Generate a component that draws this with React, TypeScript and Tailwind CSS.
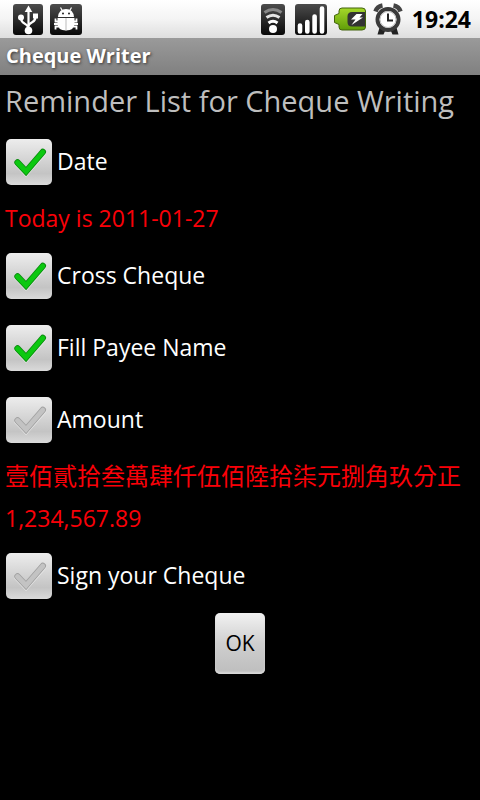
import { useState } from 'react'
import { clsx } from 'clsx'

interface CheckItem {
  id: string
  label: string
  done: boolean
  notes: string[]
}

const initialItems: CheckItem[] = [
  { id: 'date', label: 'Date', done: true, notes: ['Today is 2011-01-27'] },
  { id: 'cross', label: 'Cross Cheque', done: true, notes: [] },
  { id: 'payee', label: 'Fill Payee Name', done: true, notes: [] },
  { id: 'amount', label: 'Amount', done: false, notes: ['壹佰貳拾叁萬肆仟伍佰陸拾柒元捌角玖分正', '1,234,567.89'] },
  { id: 'sign', label: 'Sign your Cheque', done: false, notes: [] },
]

export default function App() {
  const [items, setItems] = useState(initialItems)

  function toggle(id: string) {
    setItems(items.map(i => (i.id === id ? { ...i, done: !i.done } : i)))
  }

  return (
    <div className="min-h-screen bg-black font-['Open_Sans','Noto_Sans_CJK_TC',sans-serif]">
      <StatusBar />
      <header className="flex h-[37px] items-center bg-linear-to-b from-[#9a9a9a] to-[#808080] px-1.5 pb-0.5">
        <h1 className="text-xl font-bold text-white [text-shadow:1px_1px_3px_#333]">Cheque Writer</h1>
      </header>

      <main className="px-[5px]">
        <h2 className="py-1.5 text-[29px] leading-[39px] whitespace-nowrap text-[#bebebe]">Reminder List for Cheque Writing</h2>
        {items.map(item => (
          <div key={item.id}>
            <CheckRow item={item} onToggle={() => toggle(item.id)} />
            {item.notes.map(note => <Note key={note} text={note} />)}
          </div>
        ))}
        <div className="flex justify-center">
          <button
            type="button"
            className="mt-px h-[61px] rounded-[5px] bg-linear-to-b from-[#f2f2f2] via-[#cfcfcf] via-50% to-[#bdbdbd] px-2.5 text-[21px] text-black shadow-[inset_0_-2px_2px_#d8d8d8]"
          >
            OK
          </button>
        </div>
      </main>
    </div>
  )
}

function Note({ text }: { text: string }) {
  const chinese = /[\u4e00-\u9fff]/.test(text)
  return (
    <p
      lang={chinese ? 'zh-Hant' : undefined}
      className={clsx('h-[42px] leading-10 whitespace-nowrap text-[#fa0008]', chinese ? 'text-2xl' : 'text-[23px]')}
    >
      {text}
    </p>
  )
}

function CheckRow({ item, onToggle }: { item: CheckItem; onToggle: () => void }) {
  return (
    <label className="flex h-[72px] items-center gap-[5px] pl-px">
      <span className="grid size-[46px]">
        <input
          type="checkbox"
          checked={item.done}
          onChange={onToggle}
          className="col-start-1 row-start-1 size-[46px] appearance-none rounded-[5px] bg-linear-to-b from-[#ededed] via-[#c4c4c4] via-75% to-[#dadada]"
        />
        <svg viewBox="0 0 46 46" className="pointer-events-none col-start-1 row-start-1 size-[46px]" fill="none" strokeLinecap="round">
          <path d="M11.500 24.500l8.500 9L37 14" stroke="#e6e6e6" strokeWidth="6.500" />
          <path d="M11.500 23.500l8.500 9L36.800 13" className={clsx(item.done ? 'stroke-[#0a8a0e]' : 'stroke-[#a0a0a0]')} strokeWidth="6.400" />
          <path d="M11.500 23.500l8.500 9L36.800 13" className={clsx(item.done ? 'stroke-[#0cc810]' : 'stroke-[#c3c3c3]')} strokeWidth="4.800" />
        </svg>
      </span>
      <span className="pb-0.5 text-[23px] text-white">{item.label}</span>
    </label>
  )
}

function StatusBar() {
  return (
    <div className="flex h-[38px] items-center justify-between bg-linear-to-b from-white via-[#f4f4f4] via-50% to-[#dedede] pr-[9px] pl-[13px]">
      <div className="flex items-center gap-[7px]">
        <UsbIcon />
        <DebugIcon />
      </div>
      <div className="flex items-center gap-[7px]">
        <div className="flex items-center gap-2.5">
          <WifiIcon />
          <SignalIcon />
        </div>
        <BatteryIcon />
        <AlarmIcon />
        <span className="pl-0.5 text-[23px] font-bold text-black">19:24</span>
      </div>
    </div>
  )
}

// dark rounded tile shared by most of the status icons
function Tile({ width }: { width: number }) {
  return (
    <>
      <defs>
        <linearGradient id="tile" x1="0" y1="0" x2="0" y2="1">
          <stop offset="0" stopColor="#4c4c4c" />
          <stop offset="1" stopColor="#080808" />
        </linearGradient>
      </defs>
      <rect width={width} height="31" rx="3" fill="url(#tile)" />
    </>
  )
}

function UsbIcon() {
  return (
    <svg width="30" height="31" viewBox="0 0 30 31">
      <Tile width={30} />
      <g fill="none" stroke="#fff" strokeWidth="2.200">
        <path d="M15.500 26V6" />
        <path d="M15.500 24q-1-3-4-4.500-3.500-2-3.500-5.500" />
        <path d="M15.500 21.500q1-2 4-3.500 3-1.500 3-5" />
      </g>
      <path d="M15.500 1.500l3.800 6.500h-7.600z" fill="#fff" />
      <circle cx="15.500" cy="26.500" r="3.800" fill="#fff" />
      <circle cx="8" cy="13.500" r="3" fill="#fff" />
      <rect x="20" y="9.500" width="5" height="5" fill="#fff" />
    </svg>
  )
}

function DebugIcon() {
  return (
    <svg width="32" height="31" viewBox="0 0 32 31">
      <Tile width={32} />
      <g fill="none" stroke="#fff" strokeWidth="1.800">
        <path d="M12.500 7l-2-3.500M19.500 7l2-3.500" strokeWidth="1.200" />
        <path d="M9 17.500H5.500v-3M9 20H4M9 22.500H5.500v3M23 17.500h3.500v-3M23 20h5M23 22.500h3.500v3" />
      </g>
      <path d="M8 13q.8-8 8-8t8 8z" fill="#fff" />
      <path d="M7.500 14h17v5q0 7.500-8.500 7.500T7.500 19z" fill="#fff" />
      <path d="M16 14v12.500" stroke="#bbb" />
      <circle cx="13" cy="9.500" r="1" fill="#222" />
      <circle cx="19" cy="9.500" r="1" fill="#222" />
    </svg>
  )
}

function WifiIcon() {
  return (
    <svg width="24" height="31" viewBox="0 0 24 31">
      <Tile width={24} />
      <g fill="none" strokeWidth="3">
        <path d="M3.500 8.500q8.500-6 17 0" stroke="#888" />
        <path d="M5.500 13.500q6.500-4.500 13 0" stroke="#e4e4e4" />
        <path d="M7.500 19q4.500-3.500 9 0" stroke="#fff" />
      </g>
      <circle cx="12" cy="25" r="4" fill="#fff" />
    </svg>
  )
}

function SignalIcon() {
  return (
    <svg width="32" height="31" viewBox="0 0 32 31">
      <Tile width={32} />
      <g stroke="#fff" strokeWidth="4.600" strokeLinecap="round">
        <path d="M5 21.500v6M12.300 18v9.500M19.600 12.500v15M27 4.500v23" />
      </g>
    </svg>
  )
}

function BatteryIcon() {
  return (
    <svg width="32" height="28" viewBox="0 0 32 28">
      <defs>
        <linearGradient id="cell" x1="0" y1="0" x2="0" y2="1">
          <stop offset="0" stopColor="#a5d82a" />
          <stop offset="1" stopColor="#5f9c08" />
        </linearGradient>
      </defs>
      <path d="M8 3h20q3.500 0 3.500 3v16q0 3-3.500 3H8q-3 0-3-3v-2.500L.5 17.500v-7L5 8.500V6q0-3 3-3z" fill="url(#cell)" stroke="#42630c" />
      <path d="M31 7H18q-4.500 0-4.500 4.500v5.500q0 4.500 4.500 4.500h13z" fill="#333" />
      <path d="M22.500 9h6l-3 3.500h3.500l-11.500 7.500 4-5.500h-4.500z" fill="#fff" />
    </svg>
  )
}

function AlarmIcon() {
  return (
    <svg width="30" height="32" viewBox="0 0 30 32">
      <path d="M7 23l-2.500 8.500h6l2-4.500zM23 23l2.500 8.500h-6L17.500 27z" fill="#222" />
      <path d="M2.500 8.500Q4 3.500 9.500 2.500M27.500 8.500Q26 3.500 20.500 2.500" fill="none" stroke="#444" strokeWidth="4.500" />
      <circle cx="15" cy="16.500" r="10.500" fill="#fff" stroke="#3a3a3a" strokeWidth="4" />
      <circle cx="15" cy="16.500" r="8" fill="none" stroke="#bbb" />
      <path d="M15 10.500v7h5" fill="none" stroke="#222" strokeWidth="2" />
    </svg>
  )
}
